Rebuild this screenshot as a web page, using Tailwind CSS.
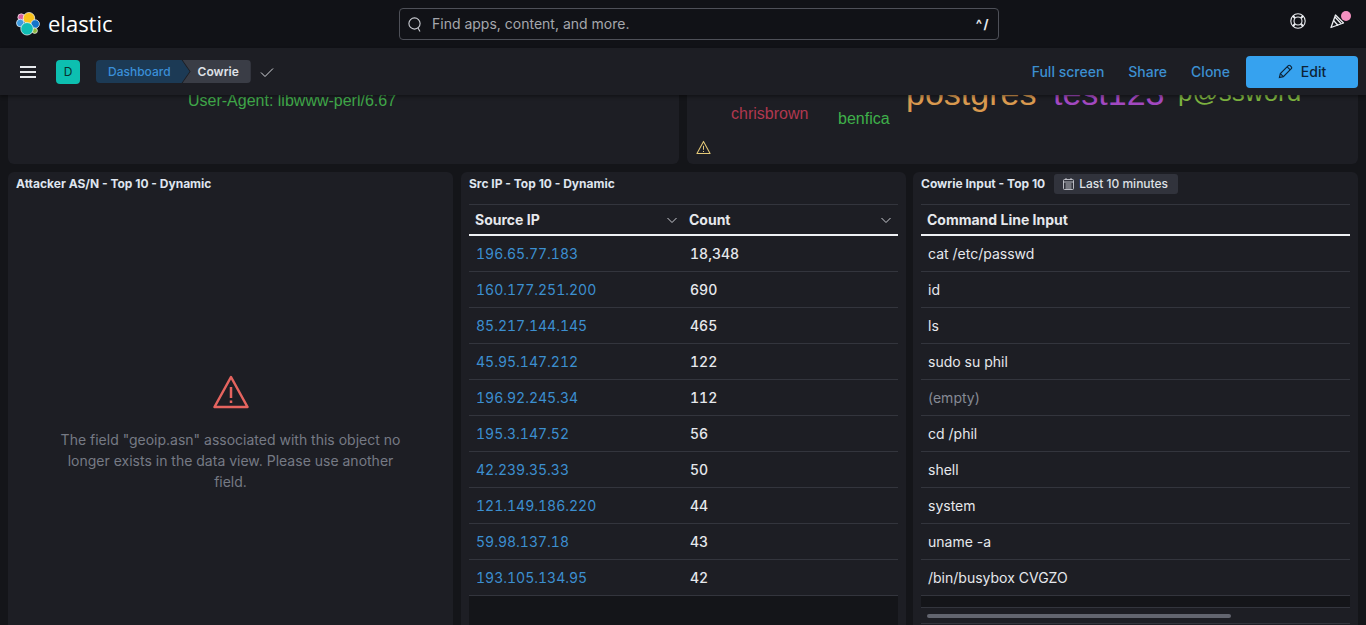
<!DOCTYPE html>
<html>
<head>
<meta charset="utf-8">
<script src="https://cdn.jsdelivr.net/npm/@tailwindcss/browser@4"></script>
</head>
<body class="bg-[#141519] font-['Inter','Liberation_Sans',sans-serif] h-[625px] overflow-hidden">
  <!-- top nav -->
  <header class="h-12 bg-[#111217] flex items-center relative">
    <div class="w-[399px] pl-4 flex items-center gap-[8px]">
      <svg width="24" height="24" viewBox="0 0 25 25" stroke="#fff" stroke-width="0.7">
        <circle cx="5.5" cy="5.5" r="3.6" fill="#d6609e"/>
        <circle cx="4.5" cy="11.5" r="4" fill="#3d9be0"/>
        <circle cx="13.5" cy="6.5" r="6" fill="#f9c31c"/>
        <circle cx="20" cy="12.5" r="4.4" fill="#1473c9"/>
        <circle cx="19.5" cy="19.5" r="2.8" fill="#8db83f"/>
        <circle cx="11.5" cy="17.5" r="6.5" fill="#10bdb4"/>
      </svg>
      <span class="text-[22px] text-white font-normal leading-none font-['Open_Sans',sans-serif] relative top-[-1px]">elastic</span>
    </div>
    <div class="w-[600px] h-8 border border-[#4e5058] rounded-[4px] flex items-center pl-[8px] pr-[8px] gap-[10px] bg-[#111217]">
      <svg width="14" height="15" viewBox="0 0 14 15" fill="none" stroke="#c9cbd1" stroke-width="1.1"><circle cx="6.5" cy="6.5" r="5.6"/><path d="M10 11l2 3.5"/></svg>
      <span class="text-sm text-[#a5a7ad] flex-1">Find apps, content, and more.</span>
      <span class="text-[13px] font-bold text-[#e8e9ec] tracking-[1.5px] leading-none">^/</span>
    </div>
    <div class="absolute right-[12px] top-[8px] flex items-center gap-[24px]">
      <svg class="mt-[1px]" width="16" height="16" viewBox="0 0 16 16" fill="none" stroke="#eceef2" stroke-width="1.1"><circle cx="8" cy="8" r="7.2"/><circle cx="8" cy="8" r="4"/><path d="M3 3l2.2 2.2M13 3l-2.2 2.2M3 13l2.2-2.2M13 13l-2.2-2.2" stroke-width="2"/></svg>
      <div class="relative w-[24px] h-6 flex items-center">
        <svg class="mt-[1px]" width="17" height="17" viewBox="0 0 17 17" fill="none" stroke="#eceef2" stroke-width="1.3"><path d="M1 15.5L5.5 3l8 8z" stroke-linejoin="round"/><path d="M3.6 8.5l4.5 5M5 5l6 6.5"/></svg>
        <span class="absolute right-[3px] top-[3px] w-[10px] h-[10px] rounded-full bg-[#f490c0]"></span>
      </div>
    </div>
  </header>

  <!-- app bar -->
  <div class="h-[47px] bg-[#1d1e24] flex items-center pl-[20px] pr-2 relative z-10 shadow-[0_2px_3px_rgba(0,0,0,0.35)]">
    <svg width="16" height="14" viewBox="0 0 16 14" fill="#e6e8ec"><rect y="1" width="16" height="2"/><rect y="6" width="16" height="2"/><rect y="11" width="16" height="2"/></svg>
    <div class="ml-[20px] w-6 h-6 rounded-[4px] bg-[#0dbfb0] text-[#07312e] text-xs flex items-center justify-center">D</div>
    <div class="ml-4 flex h-[23px] text-xs font-medium items-stretch">
      <div class="bg-[#1c3a55] text-[#3a8fd8] pl-3 pr-[19px] rounded-l-[4px] flex items-center [clip-path:polygon(0_0,calc(100%-8px)_0,100%_50%,calc(100%-8px)_100%,0_100%)]">Dashboard</div>
      <div class="bg-[#3a3d46] text-[#dfe1e6] font-semibold pl-[15px] pr-3 rounded-r-[4px] ml-[-7px] flex items-center [clip-path:polygon(0_0,100%_0,100%_100%,0_100%,8px_50%)]">Cowrie</div>
    </div>
    <svg class="ml-[9px]" width="14" height="14" viewBox="0 0 14 14" fill="none" stroke="#d5d7dc" stroke-width="1"><path d="M1 7.5l4 4 8-8"/></svg>
    <div class="ml-auto flex items-center text-sm font-medium text-[#3c8fd0]">
      <span>Full screen</span>
      <span class="ml-6">Share</span>
      <span class="ml-6">Clone</span>
      <div class="ml-[16px] w-[112px] h-8 bg-[#36a2ef] rounded-[4px] text-[#0d2336] flex items-center justify-center gap-[8px]">
        <svg width="15" height="15" viewBox="0 0 16 16" fill="none" stroke="#0d2336" stroke-width="1.2"><path d="M1.5 14.5l1-4.2L11 1.8a1.4 1.4 0 0 1 2 0l1.2 1.2a1.4 1.4 0 0 1 0 2L5.7 13.5z"/><path d="M2.5 10.3l3.2 3.2M9.8 3l3.2 3.2"/></svg>
        <span>Edit</span>
      </div>
    </div>
  </div>

  <main class="px-2">
    <!-- cut-off top row -->
    <div class="grid grid-cols-2 gap-2 h-[69px]">
      <div class="relative overflow-hidden bg-[#1d1e24] rounded-b-[6px]">
        <span class="absolute left-[180px] top-[-3px] text-base leading-[18px] text-[#3fa648] font-['Liberation_Sans',sans-serif] whitespace-nowrap">User-Agent: libwww-perl/6.67</span>
      </div>
      <div class="relative overflow-hidden bg-[#1d1e24] rounded-b-[6px] font-['Liberation_Sans',sans-serif]">
        <span class="absolute left-[44px] top-[10px] text-base leading-[18px] text-[#b0384f] whitespace-nowrap">chrisbrown</span>
        <span class="absolute left-[151px] top-[15px] text-base leading-[18px] text-[#3fb04a] whitespace-nowrap">benfica</span>
        <span class="absolute left-[219px] top-[-23px] text-[34px] leading-[42px] text-[#d9994f] whitespace-nowrap">postgres</span>
        <span class="absolute left-[366px] top-[-23px] text-[34px] leading-[42px] text-[#a248c0] whitespace-nowrap">test123</span>
        <span class="absolute left-[491px] top-[-19px] text-[26px] leading-[32px] text-[#7cb13f] whitespace-nowrap">p@ssword</span>
        <svg class="absolute left-[9px] top-[45px]" width="15" height="15" viewBox="0 0 16 16" fill="none" stroke="#e3c878" stroke-width="1.1"><path d="M8 1.5L15 14.5H1z" stroke-linejoin="round"/><path d="M8 6v4.5M8 11.7v1.2"/></svg>
      </div>
    </div>

    <!-- panels -->
    <div class="grid grid-cols-[445px_445px_444px] gap-x-2 mt-2 h-[460px]">
      <section class="bg-[#1d1e24] rounded-t-[6px] relative">
        <h2 class="pl-2 pt-[5px] text-xs font-bold leading-[14px] text-[#dfe5ef]">Attacker AS/N - Top 10 - Dynamic</h2>
        <div class="flex flex-col items-center pt-[184px] px-8">
          <svg width="36" height="34" viewBox="0 0 36 34" fill="none" stroke="#e5645f" stroke-width="2.5"><path d="M18 2L34.5 32H1.5z" stroke-linejoin="round"/><path d="M18 12v11M18 25.5v2.5"/></svg>
          <p class="mt-[20px] text-sm leading-[21px] text-center text-[#767a84] w-[345px]">The field "geoip.asn" associated with this object no longer exists in the data view. Please use another field.</p>
        </div>
      </section>

      <section class="bg-[#1d1e24] rounded-t-[6px] px-2">
        <h2 class="pt-[5px] h-[32px] text-xs font-bold leading-[14px] text-[#dfe5ef]">Src IP - Top 10 - Dynamic</h2>
        <div class="border-t border-[#33353d] bg-[#141519] h-[428px] text-sm">
          <div class="h-[31px] grid grid-cols-[214px_1fr] bg-[#1d1e24] border-b-2 border-[#eef0f4] font-bold text-[#e6e8ec]">
            <div class="flex items-center justify-between pl-[6px] pr-[5px]">Source IP
              <svg width="12" height="12" viewBox="0 0 12 12" fill="none" stroke="#c9cbd1"><path d="M1.5 4l4.5 4.5L10.5 4"/></svg></div>
            <div class="flex items-center justify-between pl-[6px] pr-[6px]">Count
              <svg width="12" height="12" viewBox="0 0 12 12" fill="none" stroke="#c9cbd1"><path d="M1.5 4l4.5 4.5L10.5 4"/></svg></div>
          </div>
          <div class="grid grid-cols-[214px_1fr] h-9 items-center bg-[#1d1e24] border-b border-[#33353d] tabular-nums"><span class="pl-[7px] text-[#3c8fd0]">196.65.77.183</span><span class="pl-[7px] font-medium text-[#e6e8ec]">18,348</span></div>
          <div class="grid grid-cols-[214px_1fr] h-9 items-center bg-[#1d1e24] border-b border-[#33353d] tabular-nums"><span class="pl-[7px] text-[#3c8fd0]">160.177.251.200</span><span class="pl-[7px] font-medium text-[#e6e8ec]">690</span></div>
          <div class="grid grid-cols-[214px_1fr] h-9 items-center bg-[#1d1e24] border-b border-[#33353d] tabular-nums"><span class="pl-[7px] text-[#3c8fd0]">85.217.144.145</span><span class="pl-[7px] font-medium text-[#e6e8ec]">465</span></div>
          <div class="grid grid-cols-[214px_1fr] h-9 items-center bg-[#1d1e24] border-b border-[#33353d] tabular-nums"><span class="pl-[7px] text-[#3c8fd0]">45.95.147.212</span><span class="pl-[7px] font-medium text-[#e6e8ec]">122</span></div>
          <div class="grid grid-cols-[214px_1fr] h-9 items-center bg-[#1d1e24] border-b border-[#33353d] tabular-nums"><span class="pl-[7px] text-[#3c8fd0]">196.92.245.34</span><span class="pl-[7px] font-medium text-[#e6e8ec]">112</span></div>
          <div class="grid grid-cols-[214px_1fr] h-9 items-center bg-[#1d1e24] border-b border-[#33353d] tabular-nums"><span class="pl-[7px] text-[#3c8fd0]">195.3.147.52</span><span class="pl-[7px] font-medium text-[#e6e8ec]">56</span></div>
          <div class="grid grid-cols-[214px_1fr] h-9 items-center bg-[#1d1e24] border-b border-[#33353d] tabular-nums"><span class="pl-[7px] text-[#3c8fd0]">42.239.35.33</span><span class="pl-[7px] font-medium text-[#e6e8ec]">50</span></div>
          <div class="grid grid-cols-[214px_1fr] h-9 items-center bg-[#1d1e24] border-b border-[#33353d] tabular-nums"><span class="pl-[7px] text-[#3c8fd0]">121.149.186.220</span><span class="pl-[7px] font-medium text-[#e6e8ec]">44</span></div>
          <div class="grid grid-cols-[214px_1fr] h-9 items-center bg-[#1d1e24] border-b border-[#33353d] tabular-nums"><span class="pl-[7px] text-[#3c8fd0]">59.98.137.18</span><span class="pl-[7px] font-medium text-[#e6e8ec]">43</span></div>
          <div class="grid grid-cols-[214px_1fr] h-9 items-center bg-[#1d1e24] border-b border-[#33353d] tabular-nums"><span class="pl-[7px] text-[#3c8fd0]">193.105.134.95</span><span class="pl-[7px] font-medium text-[#e6e8ec]">42</span></div>
        </div>
      </section>

      <section class="bg-[#1d1e24] rounded-t-[6px] px-2 ml-[-1px]">
        <div class="h-[32px] flex items-start gap-[9px]">
          <h2 class="pt-[5px] text-xs font-bold leading-[14px] text-[#dfe5ef]">Cowrie Input - Top 10</h2>
          <div class="mt-[2px] h-5 pl-[9px] pr-[10px] rounded-[3px] bg-[#31333c] flex items-center gap-[5px] text-xs font-medium text-[#dfe1e6]">
            <svg width="11" height="12" viewBox="0 0 11 12" fill="none" stroke="#c9cbd1" stroke-width="0.9"><rect x="0.5" y="1.5" width="10" height="10" rx="1"/><path d="M0.5 4h10M2.5 6h6M2.5 8h6M2.5 10h6M3 0v2M8 0v2"/></svg>
            Last 10 minutes
          </div>
        </div>
        <div class="border-t border-[#33353d] h-[428px] text-sm text-[#e6e8ec]">
          <div class="h-[31px] flex items-center pl-[6px] border-b-2 border-[#eef0f4] font-bold">Command Line Input</div>
          <div class="h-9 flex items-center pl-[7px] border-b border-[#33353d]">cat /etc/passwd</div>
          <div class="h-9 flex items-center pl-[7px] border-b border-[#33353d]">id</div>
          <div class="h-9 flex items-center pl-[7px] border-b border-[#33353d]">ls</div>
          <div class="h-9 flex items-center pl-[7px] border-b border-[#33353d]">sudo su phil</div>
          <div class="h-9 flex items-center pl-[7px] border-b border-[#33353d] text-[#868a94]">(empty)</div>
          <div class="h-9 flex items-center pl-[7px] border-b border-[#33353d]">cd /phil</div>
          <div class="h-9 flex items-center pl-[7px] border-b border-[#33353d]">shell</div>
          <div class="h-9 flex items-center pl-[7px] border-b border-[#33353d]">system</div>
          <div class="h-9 flex items-center pl-[7px] border-b border-[#33353d]">uname -a</div>
          <div class="h-9 flex items-center pl-[7px] border-b border-[#33353d]">/bin/busybox CVGZO</div>
          <div class="h-[12px] bg-[#141519] border-b border-[#33353d]"></div>
          <div class="h-[16px] border-b border-[#33353d] pl-[6px] pt-[6px]"><div class="w-[304px] h-[4px] rounded-full bg-[#62656f]"></div></div>
        </div>
      </section>
    </div>
  </main>
</body>
</html>
